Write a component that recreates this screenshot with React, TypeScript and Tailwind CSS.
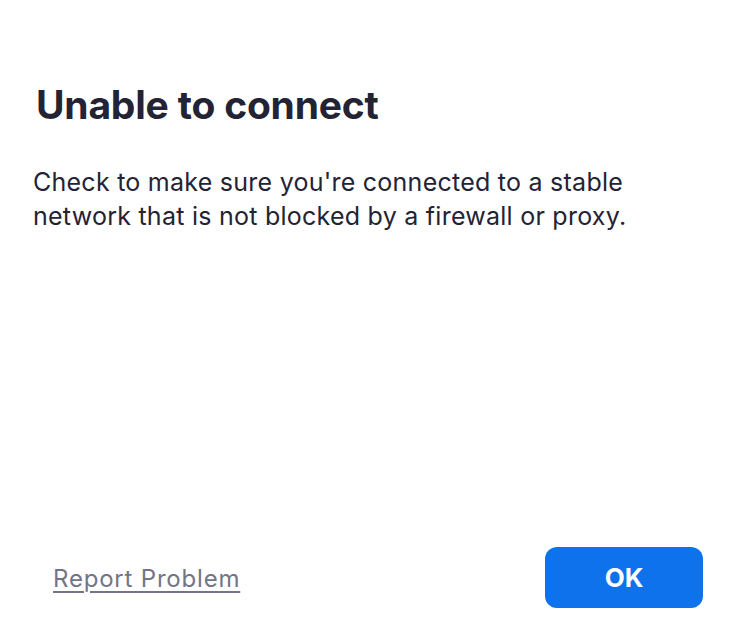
import React from "react";

export default function App() {
  return (
    <div
      className="flex h-[636px] w-[738px] flex-col bg-white text-[#232333]"
      style={{ fontFamily: "Inter, 'Noto Sans', sans-serif" }}
    >
      <div className="flex-1 px-[33px] pt-[81px]">
        <h1 className="pl-[3px] text-[39px] font-bold leading-[48px] tracking-[-0.2px]">
          Unable to connect
        </h1>
        <p className="mt-[36px] text-[25px] leading-[34px] tracking-[0.25px]">
          Check to make sure you're connected to a stable
          <br />
          network that is not blocked by a firewall or proxy.
        </p>
      </div>
      <div className="flex items-center justify-between pb-[28px] pl-[53px] pr-[35px]">
        <a className="mt-[3px] text-[24px] leading-[30px] tracking-[0.8px] text-[#747487] underline decoration-[1.5px] underline-offset-[4px]">
          Report Problem
        </a>
        <button className="flex h-[61px] w-[158px] items-center justify-center rounded-[12px] bg-[#0e72ed] text-[26px] font-bold text-white">
          OK
        </button>
      </div>
    </div>
  );
}
